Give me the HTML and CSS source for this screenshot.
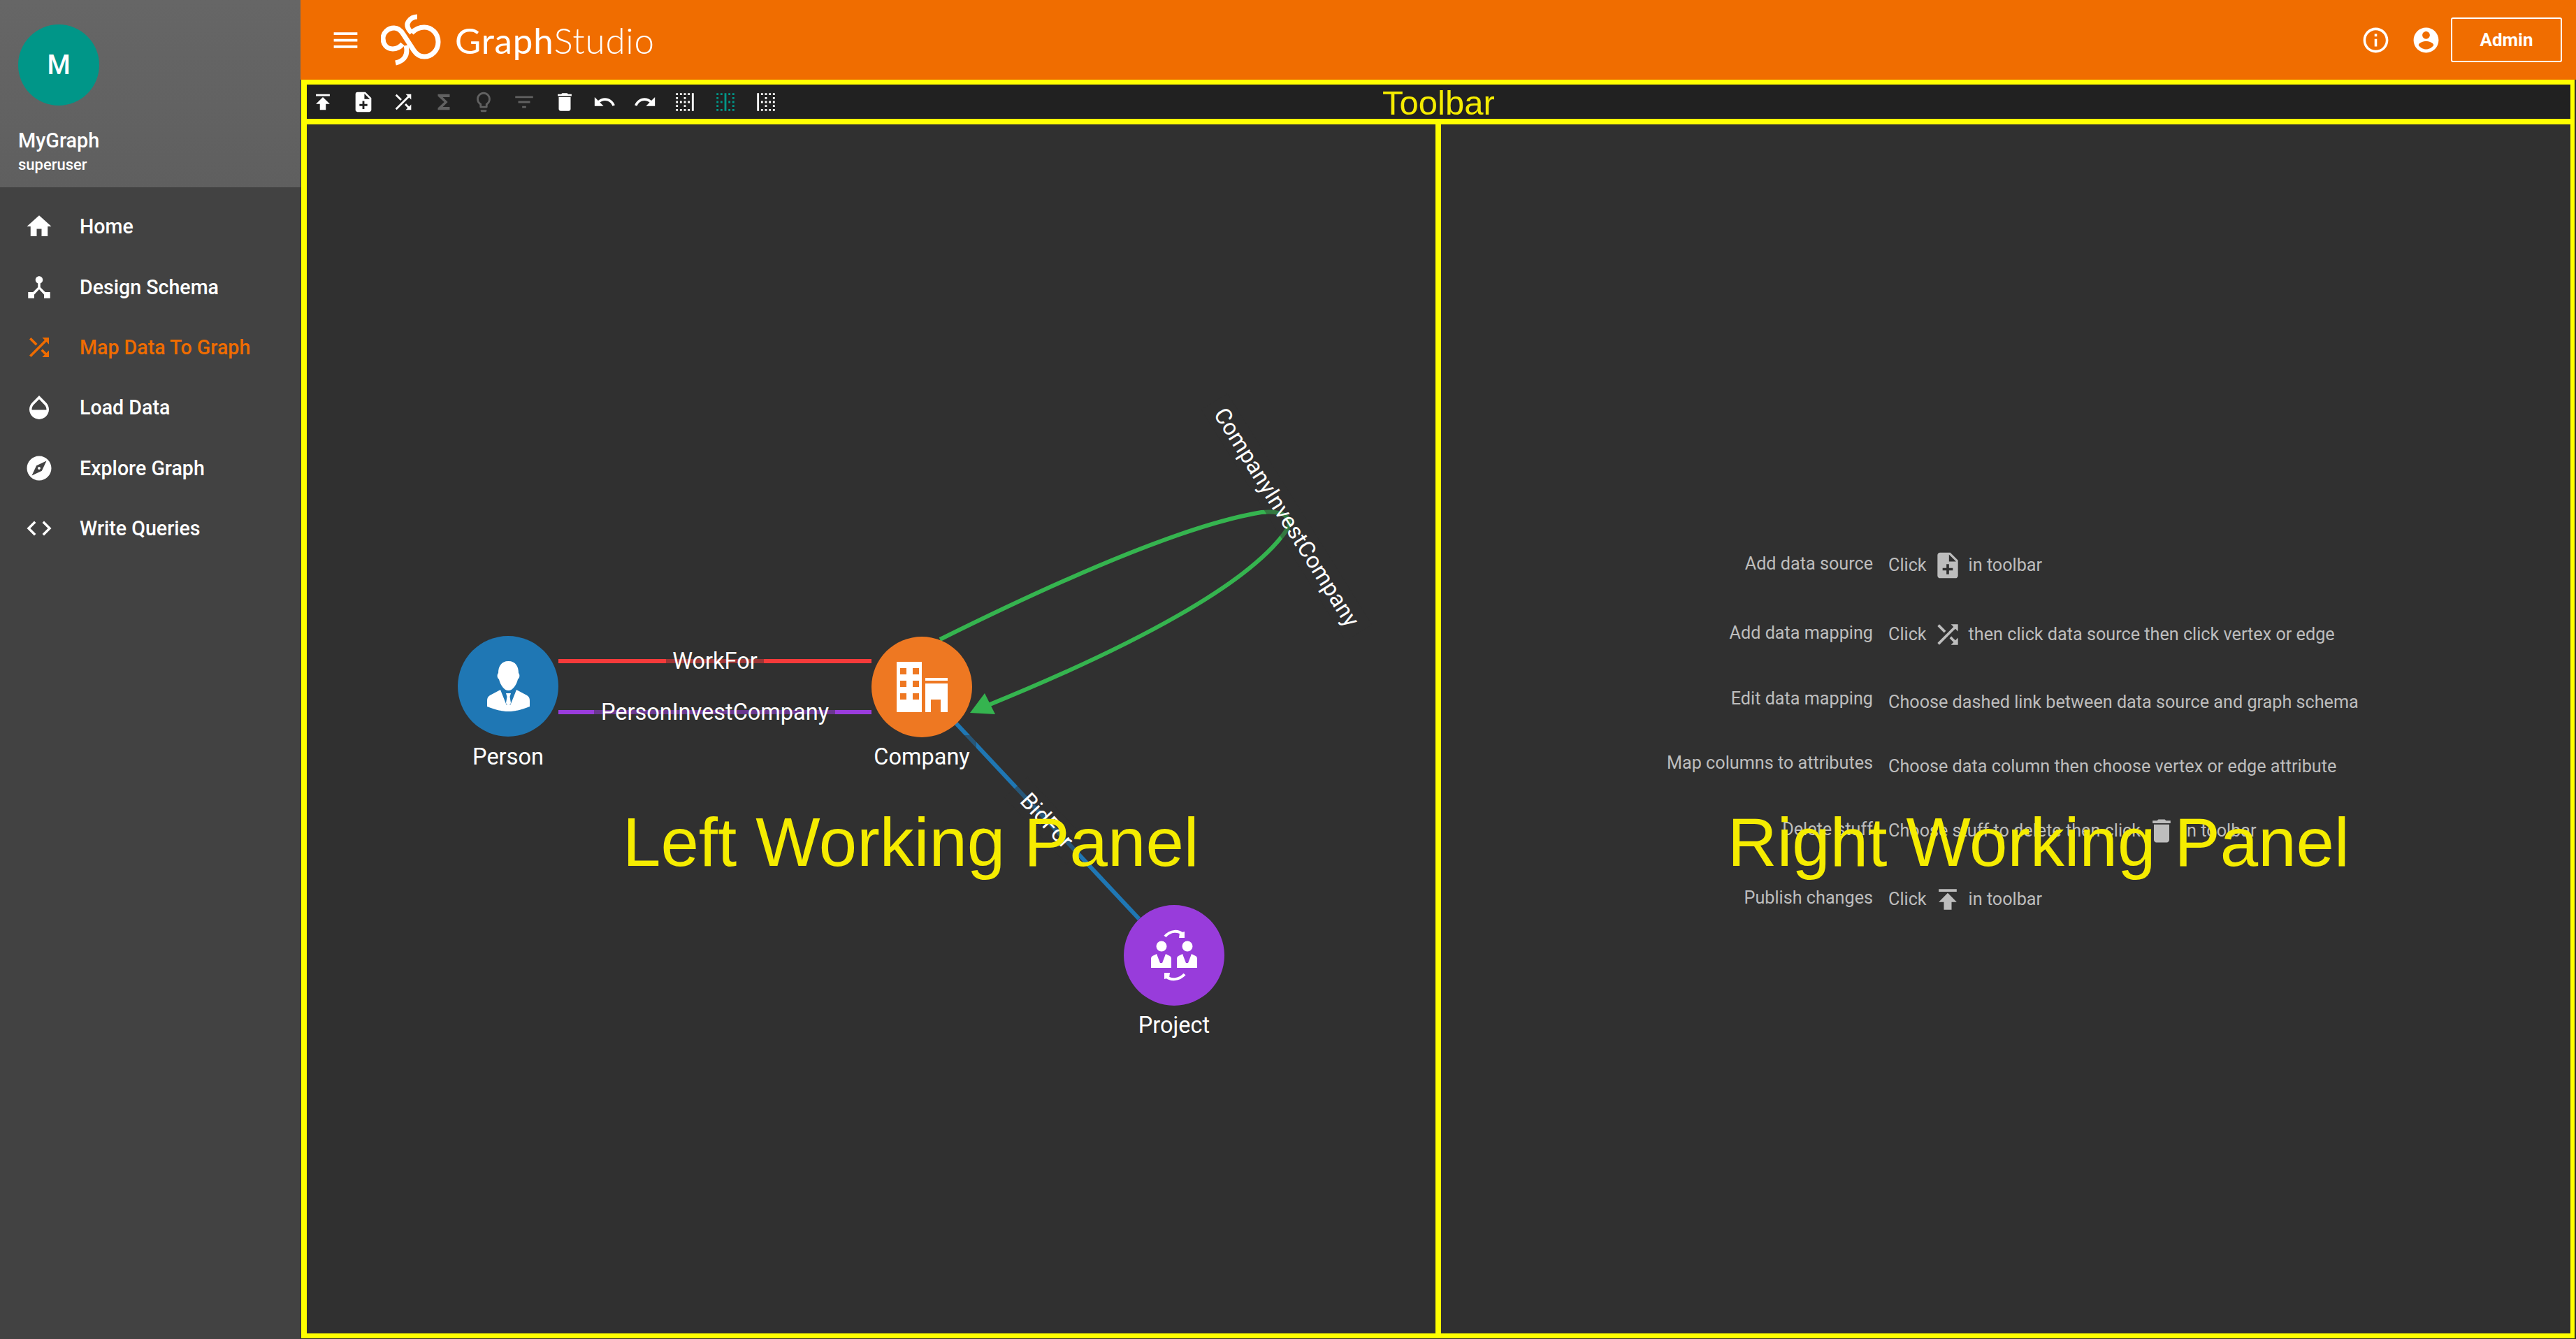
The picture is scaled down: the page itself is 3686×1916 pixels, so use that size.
FILE: index.html
```html
<!DOCTYPE html>
<html lang="en">
<head>
  <meta charset="UTF-8" />
  <title>GraphStudio - Map Data To Graph</title>
  <link rel="stylesheet" href="styles.css">
</head>
<body>

  <svg class="icon-defs" width="0" height="0">
    <symbol id="i-menu" viewBox="0 0 24 24"><path d="M3 18h18v-2H3v2zm0-5h18v-2H3v2zm0-7v2h18V6H3z"/></symbol>
    <symbol id="i-home" viewBox="0 0 24 24"><path d="M10 20v-6h4v6h5v-8h3L12 3 2 12h3v8z"/></symbol>
    <symbol id="i-hub" viewBox="0 0 24 24"><path d="M17 16l-4-4V8.82C14.16 8.4 15 7.3 15 6c0-1.66-1.34-3-3-3S9 4.34 9 6c0 1.3.84 2.4 2 2.82V12l-4 4H3v5h5v-3.05l4-4.2 4 4.2V21h5v-5h-4z"/></symbol>
    <symbol id="i-shuffle" viewBox="0 0 24 24"><path d="M10.59 9.17L5.41 4 4 5.41l5.17 5.17 1.42-1.41zM14.5 4l2.04 2.04L4 18.59 5.41 20 17.96 7.46 20 9.5V4h-5.5zm.33 9.41l-1.41 1.41 3.13 3.13L14.5 20H20v-5.5l-2.04 2.04-3.13-3.13z"/></symbol>
    <symbol id="i-opacity" viewBox="0 0 24 24"><path d="M17.66 8L12 2.35 6.34 8C4.78 9.56 4 11.64 4 13.64s.78 4.11 2.34 5.67 3.61 2.35 5.66 2.35 4.1-.79 5.66-2.35S20 15.64 20 13.64 19.22 9.56 17.66 8zM6 14c.01-2 .62-3.27 1.76-4.4L12 5.27l4.24 4.38C17.38 10.77 17.99 12 18 14H6z"/></symbol>
    <symbol id="i-explore" viewBox="0 0 24 24"><path d="M12 10.9c-.61 0-1.1.49-1.1 1.1s.49 1.1 1.1 1.1c.61 0 1.1-.49 1.1-1.1s-.49-1.1-1.1-1.1zM12 2C6.48 2 2 6.48 2 12s4.48 10 10 10 10-4.48 10-10S17.52 2 12 2zm2.19 12.19L6 18l3.81-8.19L18 6l-3.81 8.19z"/></symbol>
    <symbol id="i-code" viewBox="0 0 24 24"><path d="M9.4 16.6L4.8 12l4.6-4.6L8 6l-6 6 6 6 1.4-1.4zm5.2 0l4.6-4.6-4.6-4.6L16 6l6 6-6 6-1.4-1.4z"/></symbol>
    <symbol id="i-info" viewBox="0 0 24 24"><path d="M11 17h2v-6h-2v6zm1-15C6.48 2 2 6.48 2 12s4.48 10 10 10 10-4.48 10-10S17.52 2 12 2zm0 18c-4.41 0-8-3.59-8-8s3.59-8 8-8 8 3.59 8 8-3.59 8-8 8zM11 9h2V7h-2v2z"/></symbol>
    <symbol id="i-account" viewBox="0 0 24 24"><path d="M12 2C6.48 2 2 6.48 2 12s4.48 10 10 10 10-4.48 10-10S17.52 2 12 2zm0 3c1.66 0 3 1.34 3 3s-1.34 3-3 3-3-1.34-3-3 1.34-3 3-3zm0 14.2c-2.5 0-4.71-1.28-6-3.22.03-1.99 4-3.08 6-3.08 1.99 0 5.97 1.09 6 3.08-1.29 1.94-3.5 3.22-6 3.22z"/></symbol>
    <symbol id="i-publish" viewBox="0 0 24 24"><path d="M5 4v2h14V4H5zm0 10h4v6h6v-6h4l-7-7-7 7z"/></symbol>
    <symbol id="i-note-add" viewBox="0 0 24 24"><path d="M14 2H6c-1.1 0-1.99.9-1.99 2L4 20c0 1.1.89 2 1.99 2H18c1.1 0 2-.9 2-2V8l-6-6zm2 14h-3v3h-2v-3H8v-2h3v-3h2v3h3v2zm-3-7V3.5L18.5 9H13z"/></symbol>
    <symbol id="i-sigma" viewBox="0 0 24 24"><path d="M18 4H6v2l6.5 6L6 18v2h12v-3h-7l5-5-5-5h7z"/></symbol>
    <symbol id="i-bulb" viewBox="0 0 24 24"><path d="M9 21c0 .55.45 1 1 1h4c.55 0 1-.45 1-1v-1H9v1zm3-19C8.14 2 5 5.14 5 9c0 2.38 1.19 4.47 3 5.74V17c0 .55.45 1 1 1h6c.55 0 1-.45 1-1v-2.26c1.81-1.27 3-3.36 3-5.74 0-3.86-3.14-7-7-7zm2.85 11.1l-.85.6V16h-4v-2.3l-.85-.6C7.8 12.16 7 10.63 7 9c0-2.76 2.24-5 5-5s5 2.24 5 5c0 1.63-.8 3.16-2.15 4.1z"/></symbol>
    <symbol id="i-filter" viewBox="0 0 24 24"><path d="M10 18h4v-2h-4v2zM3 6v2h18V6H3zm3 7h12v-2H6v2z"/></symbol>
    <symbol id="i-delete" viewBox="0 0 24 24"><path d="M6 19c0 1.1.9 2 2 2h8c1.1 0 2-.9 2-2V7H6v12zM19 4h-3.5l-1-1h-5l-1 1H5v2h14V4z"/></symbol>
    <symbol id="i-undo" viewBox="0 0 24 24"><path d="M12.5 8c-2.65 0-5.05.99-6.9 2.6L2 7v9h9l-3.62-3.62c1.39-1.16 3.16-1.88 5.12-1.88 3.54 0 6.55 2.31 7.6 5.5l2.37-.78C21.08 11.03 17.15 8 12.5 8z"/></symbol>
    <symbol id="i-redo" viewBox="0 0 24 24"><path d="M18.4 10.6C16.55 8.99 14.15 8 11.5 8c-4.65 0-8.58 3.03-9.96 7.22L3.9 16c1.05-3.19 4.05-5.5 7.6-5.5 1.95 0 3.73.72 5.12 1.88L13 16h9V7l-3.6 3.6z"/></symbol>
    <symbol id="i-border-right" viewBox="0 0 24 24"><path d="M7 21h2v-2H7v2zM3 5h2V3H3v2zm4 0h2V3H7v2zm0 8h2v-2H7v2zm-4 8h2v-2H3v2zm8 0h2v-2h-2v2zm-8-8h2v-2H3v2zm0 4h2v-2H3v2zm0-8h2V7H3v2zm8 8h2v-2h-2v2zm4-4h2v-2h-2v2zm4-10v18h2V3h-2zm-4 18h2v-2h-2v2zm0-16h2V3h-2v2zm-4 8h2v-2h-2v2zm0-8h2V3h-2v2zm0 4h2V7h-2v2z"/></symbol>
    <symbol id="i-border-vertical" viewBox="0 0 24 24"><path d="M3 9h2V7H3v2zm0-4h2V3H3v2zm4 16h2v-2H7v2zm0-8h2v-2H7v2zm-4 0h2v-2H3v2zm0 8h2v-2H3v2zm0-4h2v-2H3v2zM7 5h2V3H7v2zm12 12h2v-2h-2v2zm-8 4h2V3h-2v18zm8 0h2v-2h-2v2zm0-8h2v-2h-2v2zm0-10v2h2V3h-2zm0 6h2V7h-2v2zm-4-4h2V3h-2v2zm0 16h2v-2h-2v2zm0-8h2v-2h-2v2z"/></symbol>
    <symbol id="i-border-left" viewBox="0 0 24 24"><path d="M11 21h2v-2h-2v2zm0-4h2v-2h-2v2zm0-12h2V3h-2v2zm0 4h2V7h-2v2zm0 4h2v-2h-2v2zm-4 8h2v-2H7v2zM7 5h2V3H7v2zm0 8h2v-2H7v2zM3 21h2V3H3v18zM19 9h2V7h-2v2zm-4 12h2v-2h-2v2zm4-4h2v-2h-2v2zm0-14v2h2V3h-2zm0 10h2v-2h-2v2zm0 8h2v-2h-2v2zm-4-8h2v-2h-2v2zm0-8h2V3h-2v2z"/></symbol>
  </svg>

  <aside class="sidebar">
    <div class="profile">
      <div class="avatar">M</div>
      <div class="profile-name">MyGraph</div>
      <div class="profile-role">superuser</div>
    </div>
    <nav>
      <ul class="nav-list">
        <li class="nav-item"><svg class="nav-icon"><use href="#i-home"/></svg>Home</li>
        <li class="nav-item"><svg class="nav-icon"><use href="#i-hub"/></svg>Design Schema</li>
        <li class="nav-item active"><svg class="nav-icon"><use href="#i-shuffle"/></svg>Map Data To Graph</li>
        <li class="nav-item"><svg class="nav-icon"><use href="#i-opacity"/></svg>Load Data</li>
        <li class="nav-item"><svg class="nav-icon"><use href="#i-explore"/></svg>Explore Graph</li>
        <li class="nav-item"><svg class="nav-icon"><use href="#i-code"/></svg>Write Queries</li>
      </ul>
    </nav>
  </aside>

  <div class="main">
    <header class="topbar">
      <svg class="menu-icon"><use href="#i-menu"/></svg>
      <svg class="logo-mark" viewBox="546 18 86 76">
        <path d="M577 62C573 67 569 69 563 69C554 69 549 62 549 54C549 46 556 39 565 39C571 39 575 43 578 48L593 71C597 77 602 80 608 80C619 80 628 71 628 59C628 47 619 38 608 38C601 38 595 41 590 46"/>
        <path d="M590 46C584 40 582 34 586 29C589 25 593 23 598 23"/>
        <path d="M582 64C585 76 581 86 567 89"/>
      </svg>
      <div class="logo-text"><span class="logo-graph">Graph</span><span class="logo-studio">Studio</span></div>
      <div class="topbar-right">
        <svg class="top-icon"><use href="#i-info"/></svg>
        <svg class="top-icon"><use href="#i-account"/></svg>
        <button class="admin-btn">Admin</button>
      </div>
    </header>

    <div class="frames">
      <div class="toolbar">
        <svg class="tool"><use href="#i-publish"/></svg>
        <svg class="tool"><use href="#i-note-add"/></svg>
        <svg class="tool"><use href="#i-shuffle"/></svg>
        <svg class="tool off"><use href="#i-sigma"/></svg>
        <svg class="tool off"><use href="#i-bulb"/></svg>
        <svg class="tool off"><use href="#i-filter"/></svg>
        <svg class="tool"><use href="#i-delete"/></svg>
        <svg class="tool"><use href="#i-undo"/></svg>
        <svg class="tool"><use href="#i-redo"/></svg>
        <svg class="tool"><use href="#i-border-right"/></svg>
        <svg class="tool teal"><use href="#i-border-vertical"/></svg>
        <svg class="tool"><use href="#i-border-left"/></svg>
        <span class="toolbar-note">Toolbar</span>
      </div>

      <div class="panels">
        <section class="panel panel-left">
          <!-- viewBox uses page coordinates so the nodes are easy to place -->
          <svg class="graph" viewBox="439 178 1615 1730">
            <line class="edge red" x1="799" y1="946" x2="1247" y2="946"/>
            <line class="edge purple" x1="799" y1="1019" x2="1247" y2="1019"/>
            <line class="edge blue" x1="1368" y1="1035" x2="1630" y2="1315"/>
            <path class="edge green" d="M1345 915C1500 838 1690 752 1805 733C1835 730 1852 740 1842 757C1790 835 1620 925 1414 1009"/>
            <polygon class="arrow" points="1388,1020 1409,992 1424,1022"/>

            <rect class="label-bg" x="953" y="925" width="140" height="44"/>
            <rect class="label-bg" x="850" y="998" width="345" height="44"/>
            <rect class="label-bg" x="1241" y="1052" width="156" height="52"/>
            <rect class="label-bg" x="-65" y="-22" width="130" height="44" transform="translate(1498 1174) rotate(47)"/>
            <rect class="label-bg" x="-195" y="-22" width="390" height="44" transform="translate(1841 740) rotate(58)"/>

            <text class="edge-label" x="1023" y="957">WorkFor</text>
            <text class="edge-label" x="1023" y="1030">PersonInvestCompany</text>
            <text class="edge-label" transform="translate(1498 1174) rotate(47)" y="11">BidFor</text>
            <text class="edge-label" transform="translate(1841 740) rotate(58)" y="11">CompanyInvestCompany</text>

            <circle class="node-person" cx="727" cy="982" r="72"/>
            <circle class="node-company" cx="1319" cy="983" r="72"/>
            <circle class="node-project" cx="1680" cy="1367" r="72"/>

            <!-- person -->
            <path class="glyph" d="M727.5 946C738 946 742 954 742 963C744 965 744 970 741 972C739 980 734 988 727.5 988C721 988 716 980 714 972C711 970 711 965 713 963C713 954 717 946 727.5 946Z"/>
            <path class="glyph" d="M716 987L701 995C698 997 697 999 697 1003V1011C710 1016 719 1018 727.5 1018C736 1018 745 1016 758 1011V1003C758 999 757 997 754 995L739 987L731 1007L730 1009H725L724 1007Z"/>
            <path class="glyph" d="M724 992H731L729.5 997L731 1006L727.5 1012L724 1006L725.5 997Z"/>
            <!-- company -->
            <path class="glyph" fill-rule="evenodd" d="M1283 947H1319V1019H1283ZM1288 956V965H1297V956ZM1306 956V965H1315V956ZM1288 974V983H1297V974ZM1306 974V983H1315V974ZM1288 992V1001H1297V992ZM1306 992V1001H1315V992Z"/>
            <path class="glyph" d="M1324 970H1356V974H1324ZM1324 978H1356V1019H1346V1001H1332V1019H1324Z"/>
            <!-- project -->
            <circle class="glyph" cx="1662" cy="1354" r="7.5"/>
            <circle class="glyph" cx="1699" cy="1354" r="7.5"/>
            <path class="glyph" d="M1655 1365L1649 1368C1647 1369 1647 1371 1647 1373V1385H1676V1373C1676 1371 1676 1369 1674 1368L1668 1365L1663 1378H1660Z"/>
            <path class="glyph" d="M1692 1365L1686 1368C1684 1369 1684 1371 1684 1373V1385H1713V1373C1713 1371 1713 1369 1711 1368L1705 1365L1700 1378H1697Z"/>
            <path class="glyph-line" d="M1667 1340C1675 1331 1686 1331 1693 1337"/>
            <path class="glyph" d="M1688 1335L1695 1333V1342H1687Z"/>
            <path class="glyph-line" d="M1695 1394C1687 1403 1675 1403 1668 1397"/>
            <path class="glyph" d="M1673 1399L1666 1401V1392H1674Z"/>

            <text class="node-label" x="727" y="1094">Person</text>
            <text class="node-label" x="1319" y="1094">Company</text>
            <text class="node-label" x="1680" y="1478">Project</text>
          </svg>
          <span class="panel-note left-note">Left Working Panel</span>
        </section>

        <section class="panel panel-right">
          <div class="hints">
            <div class="hint-label">Add data source</div>
            <div class="hint-value">Click <svg class="hint-icon"><use href="#i-note-add"/></svg> in toolbar</div>
            <div class="hint-label">Add data mapping</div>
            <div class="hint-value">Click <svg class="hint-icon"><use href="#i-shuffle"/></svg> then click data source then click vertex or edge</div>
            <div class="hint-label low">Edit data mapping</div>
            <div class="hint-value">Choose dashed link between data source and graph schema</div>
            <div class="hint-label low">Map columns to attributes</div>
            <div class="hint-value">Choose data column then choose vertex or edge attribute</div>
            <div class="hint-label">Delete stuff</div>
            <div class="hint-value">Choose stuff to delete then click <svg class="hint-icon"><use href="#i-delete"/></svg> in toolbar</div>
            <div class="hint-label">Publish changes</div>
            <div class="hint-value">Click <svg class="hint-icon"><use href="#i-publish"/></svg> in toolbar</div>
          </div>
          <span class="panel-note right-note">Right Working Panel</span>
        </section>
      </div>
    </div>
  </div>

</body>
</html>
```

FILE: styles.css
```css
html, body {
  margin: 0;
  padding: 0;
  height: 100%;
  overflow: hidden;
  background-color: #303030;
  font-family: Roboto, Arial, sans-serif;
  color: white;
}

body {
  display: flex;
}

.icon-defs {
  position: absolute;
}

/* sidebar */
.sidebar {
  width: 430px;
  flex-shrink: 0;
  background-color: #424242;
}

.profile {
  height: 268px;
  box-sizing: border-box;
  padding: 35px 26px 0;
  background: linear-gradient(to bottom, #666666, #5f5f5f);
}

.avatar {
  width: 116px;
  height: 116px;
  border-radius: 50%;
  background-color: #009688;
  display: flex;
  align-items: center;
  justify-content: center;
  font-size: 38px;
  font-weight: 500;
}

.profile-name {
  margin-top: 32px;
  font-size: 28.8px;
  font-weight: 500;
  line-height: 36px;
}

.profile-role {
  font-size: 22px;
  font-weight: 500;
  line-height: 34px;
}

.nav-list {
  list-style: none;
  margin: 0;
  padding: 13px 0 0;
}

.nav-item {
  height: 86.4px;
  display: flex;
  align-items: center;
  gap: 37px;
  padding-left: 35px;
  font-size: 28.6px;
  font-weight: 500;
}

.nav-item.active {
  color: #ef6c00;
}

.nav-icon {
  width: 42px;
  height: 42px;
  fill: currentColor;
}

/* top bar */
.main {
  flex: 1;
  display: flex;
  flex-direction: column;
  min-width: 0;
}

.topbar {
  height: 114px;
  flex-shrink: 0;
  background-color: #f06d00;
  display: flex;
  align-items: center;
  padding-left: 42px;
  padding-right: 20px;
}

.menu-icon {
  width: 45px;
  height: 45px;
  fill: white;
}

.logo-mark {
  width: 86px;
  height: 76px;
  margin-left: 28px;
  fill: none;
  stroke: white;
  stroke-width: 7;
}

.logo-text {
  margin-left: 20px;
  font-family: Lato, sans-serif;
  font-size: 51px;
  letter-spacing: 0.8px;
}

.logo-graph {
  font-weight: 400;
}

.logo-studio {
  font-weight: 300;
}

.topbar-right {
  margin-left: auto;
  display: flex;
  align-items: center;
  gap: 29px;
}

.top-icon {
  width: 43px;
  height: 43px;
  fill: white;
}

.admin-btn {
  width: 159px;
  height: 64px;
  margin-left: -14.5px;
  background: transparent;
  border: 2px solid white;
  border-radius: 3px;
  color: white;
  font-family: Roboto, Arial, sans-serif;
  font-size: 26px;
  font-weight: 700;
}

/* yellow frames */
.frames {
  flex: 1;
  display: flex;
  flex-direction: column;
  padding: 0 2px 1px 1px;
  min-height: 0;
}

.toolbar {
  position: relative;
  height: 49px;
  flex-shrink: 0;
  display: flex;
  align-items: center;
  gap: 23.6px;
  padding-left: 6px;
  background-color: #212121;
  border: solid #ffff00;
  border-width: 7px 6px 8px 8px;
}

.tool {
  width: 34px;
  height: 34px;
  fill: white;
}

.tool.off {
  fill: #616161;
}

.tool.teal {
  fill: #009688;
}

.toolbar-note {
  position: absolute;
  left: 1539px;
  top: -1px;
  font-family: "Liberation Sans", Arial, sans-serif;
  font-size: 49px;
  line-height: 54px;
  color: #f5ec00;
}

.panels {
  flex: 1;
  display: flex;
  min-height: 0;
  border: solid #ffff00;
  border-width: 0 6px 7px 8px;
}

.panel {
  position: relative;
  width: 1615px;
  background-color: #303030;
}

.panel-right {
  flex: 1;
  border-left: 8px solid #ffff00;
  box-sizing: border-box;
}

.panel-left {
  flex-shrink: 0;
}

.panel-note {
  position: absolute;
  top: 979px;
  font-family: "Liberation Sans", Arial, sans-serif;
  font-size: 97.8px;
  line-height: 96px;
  color: #f5ec00;
  white-space: nowrap;
}

.left-note {
  left: 452px;
}

.right-note {
  left: 410px;
}

/* graph */
.graph {
  display: block;
  width: 100%;
  height: 100%;
}

.edge {
  fill: none;
  stroke-width: 6;
}

.edge.red { stroke: #f53a3a; }
.edge.purple { stroke: #9a3cdc; }
.edge.blue { stroke: #1f77b4; }
.edge.green { stroke: #35b44f; }

.arrow {
  fill: #35b44f;
}

.label-bg {
  fill: #303030;
  opacity: 0.45;
}

.edge-label,
.node-label {
  fill: white;
  font-family: Roboto, Arial, sans-serif;
  font-size: 32.5px;
  text-anchor: middle;
}

.node-person { fill: #1f77b4; }
.node-company { fill: #ee7822; }
.node-project { fill: #983cdb; }

.glyph {
  fill: white;
}

.glyph-line {
  fill: none;
  stroke: white;
  stroke-width: 4;
}

/* instructions in the right panel */
.hints {
  display: grid;
  grid-template-columns: 618px 1fr;
  grid-template-rows: 99px 99px 95px 89px 95px 101px;
  column-gap: 22px;
  padding-top: 581px;
  color: #bdbdbd;
  font-size: 25.2px;
}

.hint-label {
  align-self: center;
  text-align: right;
  margin-bottom: 4px;
}

.hint-label.low {
  margin-bottom: 10px;
}

.hint-value {
  align-self: center;
  display: flex;
  align-items: center;
  gap: 8px;
}

.hint-icon {
  width: 44px;
  height: 44px;
  fill: #bdbdbd;
  flex-shrink: 0;
}
```
